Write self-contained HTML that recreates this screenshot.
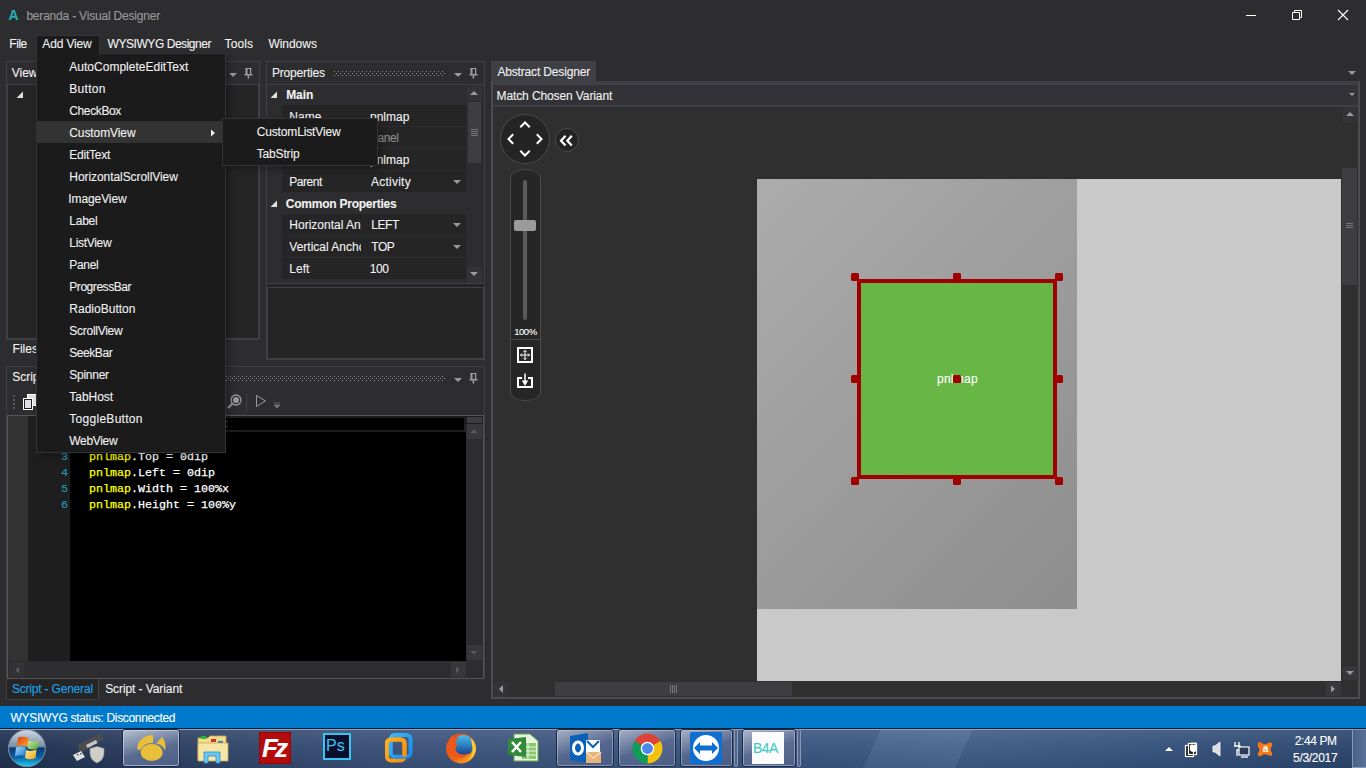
<!DOCTYPE html>
<html><head><meta charset="utf-8">
<style>
*{margin:0;padding:0;box-sizing:border-box}
html,body{width:1366px;height:768px;overflow:hidden;background:#2d2d30;font-family:"Liberation Sans",sans-serif;font-size:12px;color:#f1f1f1}
.a{position:absolute}
.t{position:absolute;white-space:nowrap;-webkit-text-stroke:0.1px currentColor}
.pr{position:absolute;left:282px;width:184px;height:21px;background:#252526}
.dd{position:absolute;width:0;height:0;border-left:4px solid transparent;border-right:4px solid transparent;border-top:4px solid #999}
.code{position:absolute;left:89px;font-family:"Liberation Mono",monospace;font-size:11.67px;line-height:16px;white-space:pre;color:#fff;-webkit-text-stroke:0.25px currentColor;margin-top:1px}
.ln{position:absolute;left:50px;width:18px;text-align:right;font-family:"Liberation Mono",monospace;font-size:11.67px;line-height:16px;color:#2b91af;-webkit-text-stroke:0.2px currentColor;margin-top:1px}
.hd{position:absolute;width:8px;height:8px;background:#a00000;border-radius:1.5px}
</style></head><body>
<!-- window controls -->
<div class="a" style="left:1246px;top:15px;width:10px;height:1px;background:#fff"></div>
<svg class="a" style="left:1290px;top:8px" width="14" height="14"><path d="M4.5 4V2.5H11.5V9.5H10M2.5 4.5H9.5V11.5H2.5Z" stroke="#fff" fill="none"/></svg>
<svg class="a" style="left:1336px;top:8px" width="14" height="14"><path d="M2 2L12 12M12 2L2 12" stroke="#fff" stroke-width="1.1" fill="none"/></svg>

<!-- Views panel -->
<div class="a" style="left:6px;top:61px;width:254px;height:279px;border:1px solid #3f3f46;background:#2d2d30"></div>
<div class="a" style="left:7px;top:84px;width:252px;height:255px;background:#252526;border:1px solid #3f3f46"></div>
<div class="dd" style="left:229px;top:73px"></div>
<svg class="a" style="left:244px;top:67px" width="10" height="12"><g fill="#a0a0a0"><rect x="1.5" y="1" width="2" height="6.5"/><rect x="6" y="1" width="1.2" height="6.5"/><rect x="1.5" y="1" width="5.7" height="1"/><rect x="0.5" y="7" width="8" height="1.5"/><rect x="3.6" y="8.5" width="1.6" height="3"/></g></svg>
<svg class="a" style="left:16px;top:91px" width="8" height="8"><path d="M7 0.5V7H0.5Z" fill="#e0e0e0"/></svg>

<!-- Properties panel -->
<div class="a" style="left:266px;top:61px;width:219px;height:299px;border:1px solid #3f3f46;background:#2d2d30"></div>
<div class="a" style="left:267px;top:284px;width:217px;height:3px;background:#252526"></div>
<div class="a" style="left:267px;top:287px;width:217px;height:72px;background:#252526;border:1px solid #3f3f46"></div>
<svg class="a" style="left:334px;top:71px" width="112" height="5"><defs><pattern id="gp" width="4" height="4" patternUnits="userSpaceOnUse"><rect x="0" y="0" width="1" height="1" fill="#8e8e90"/><rect x="2" y="2" width="1" height="1" fill="#8e8e90"/></pattern></defs><rect width="112" height="5" fill="url(#gp)"/></svg>
<div class="dd" style="left:454px;top:73px"></div>
<svg class="a" style="left:469px;top:67px" width="10" height="12"><g fill="#a0a0a0"><rect x="1.5" y="1" width="2" height="6.5"/><rect x="6" y="1" width="1.2" height="6.5"/><rect x="1.5" y="1" width="5.7" height="1"/><rect x="0.5" y="7" width="8" height="1.5"/><rect x="3.6" y="8.5" width="1.6" height="3"/></g></svg>
<div class="a" style="left:267px;top:84px;width:217px;height:200px;background:#2d2d30;border-top:1px solid #3f3f46;border-bottom:1px solid #3f3f46"></div>
<svg class="a" style="left:270px;top:91px" width="8" height="8"><path d="M7 0.5V7H0.5Z" fill="#e0e0e0"/></svg>
<div class="pr" style="top:105px"></div>
<div class="pr" style="top:127px"></div>
<div class="pr" style="top:149px"></div>
<div class="pr" style="top:171px"></div>
<svg class="a" style="left:270px;top:200px" width="8" height="8"><path d="M7 0.5V7H0.5Z" fill="#e0e0e0"/></svg>
<div class="pr" style="top:214px"></div>
<div class="pr" style="top:236px"></div>
<div class="pr" style="top:258px"></div>
<div class="dd" style="left:453px;top:180px"></div>
<div class="dd" style="left:453px;top:223px"></div>
<div class="dd" style="left:453px;top:245px"></div>
<!-- props scrollbar -->
<div class="a" style="left:467px;top:85px;width:15px;height:197px;background:#2d2d30"></div>
<div class="a" style="left:467px;top:86px;width:15px;height:15px;background:#333337"></div>
<div class="a" style="left:467px;top:267px;width:15px;height:16px;background:#333337"></div>
<svg class="a" style="left:469px;top:89px" width="10" height="8"><path d="M1 6L5 2L9 6Z" fill="#999"/></svg>
<div class="a" style="left:468px;top:102px;width:13px;height:61px;background:#3e3e42"></div>
<div class="a" style="left:471px;top:129px;width:7px;height:1px;background:#777"></div>
<div class="a" style="left:471px;top:131px;width:7px;height:1px;background:#777"></div>
<div class="a" style="left:471px;top:133px;width:7px;height:1px;background:#777"></div>
<div class="a" style="left:471px;top:135px;width:7px;height:1px;background:#777"></div>
<svg class="a" style="left:469px;top:270px" width="10" height="8"><path d="M1 2L5 6L9 2Z" fill="#999"/></svg>

<!-- Scripts panel -->
<div class="a" style="left:6px;top:366px;width:479px;height:313px;border:1px solid #3f3f46;border-bottom:none;background:#2d2d30"></div>
<svg class="a" style="left:58px;top:376px" width="388" height="5"><rect width="388" height="5" fill="url(#gp)"/></svg>
<div class="dd" style="left:454px;top:378px"></div>
<svg class="a" style="left:469px;top:372px" width="10" height="12"><g fill="#a0a0a0"><rect x="1.5" y="1" width="2" height="6.5"/><rect x="6" y="1" width="1.2" height="6.5"/><rect x="1.5" y="1" width="5.7" height="1"/><rect x="0.5" y="7" width="8" height="1.5"/><rect x="3.6" y="8.5" width="1.6" height="3"/></g></svg>
<!-- toolbar -->
<div class="a" style="left:13px;top:395px;width:2px;height:2px;background:#5a5a5a"></div>
<div class="a" style="left:13px;top:399px;width:2px;height:2px;background:#5a5a5a"></div>
<div class="a" style="left:13px;top:403px;width:2px;height:2px;background:#5a5a5a"></div>
<div class="a" style="left:13px;top:407px;width:2px;height:2px;background:#5a5a5a"></div>
<svg class="a" style="left:22px;top:393px" width="16" height="18"><rect x="5.5" y="1.5" width="9" height="11" fill="#e0e0e0" stroke="#fff"/><rect x="1.5" y="5.5" width="9" height="11" fill="#e0e0e0" stroke="#fff"/><rect x="2.5" y="6.5" width="7" height="9" fill="#e0e0e0" stroke="#222"/></svg>
<svg class="a" style="left:226px;top:393px" width="18" height="18"><circle cx="10" cy="7" r="5" stroke="#999" stroke-width="1.3" fill="none"/><circle cx="10" cy="7" r="3" fill="#999"/><path d="M6.5 10.5L2 15" stroke="#999" stroke-width="2.2"/></svg>
<div class="a" style="left:246px;top:393px;width:1px;height:18px;background:#3f3f46"></div>
<svg class="a" style="left:255px;top:394px" width="12" height="14"><path d="M1.5 1.5L10.5 7L1.5 12.5Z" stroke="#999" fill="none"/></svg>
<svg class="a" style="left:273px;top:402px" width="8" height="8"><path d="M1 1H7M1 3L4 6L7 3Z" stroke="#777" fill="#777" stroke-width="0.8"/></svg>
<!-- code area -->
<div class="a" style="left:7px;top:415px;width:477px;height:264px;background:#2d2d30;border:1px solid #555558"></div>
<div class="a" style="left:8px;top:416px;width:20px;height:245px;background:#333333"></div>
<div class="a" style="left:28px;top:416px;width:42px;height:245px;background:#1e1e1e"></div>
<div class="a" style="left:70px;top:416px;width:396px;height:245px;background:#000"></div>
<div class="a" style="left:70px;top:416px;width:396px;height:16px;background:#1e1e1e"></div><div class="a" style="left:70px;top:418px;width:394px;height:12px;background:#000"></div>
<div class="a" style="left:225px;top:421px;width:2px;height:1px;background:#3a9a3a"></div><div class="a" style="left:225px;top:426px;width:2px;height:1px;background:#3a9a3a"></div>
<div class="ln" style="top:448px">3</div>
<div class="ln" style="top:464px">4</div>
<div class="ln" style="top:480px">5</div>
<div class="ln" style="top:496px">6</div>
<div class="code" style="top:448px"><span style="color:#ffff00">pnlmap</span>.Top = 0dip</div>
<div class="code" style="top:464px"><span style="color:#ffff00">pnlmap</span>.Left = 0dip</div>
<div class="code" style="top:480px"><span style="color:#ffff00">pnlmap</span>.Width = 100%x</div>
<div class="code" style="top:496px"><span style="color:#ffff00">pnlmap</span>.Height = 100%y</div>
<!-- code scrollbars -->
<div class="a" style="left:466px;top:416px;width:17px;height:245px;background:#2d2d30"></div>
<div class="a" style="left:466px;top:416px;width:17px;height:8px;background:#3e3e42;border:1px solid #1e1e1e"></div>
<div class="a" style="left:467px;top:424px;width:15px;height:15px;background:#38383c"></div>
<svg class="a" style="left:469px;top:427px" width="10" height="8"><path d="M1.5 6L5 2.5L8.5 6Z" fill="#5a5a5a"/></svg>
<div class="a" style="left:467px;top:645px;width:15px;height:15px;background:#38383c"></div><svg class="a" style="left:469px;top:649px" width="10" height="8"><path d="M1.5 2L5 5.5L8.5 2Z" fill="#5a5a5a"/></svg>
<div class="a" style="left:8px;top:661px;width:458px;height:17px;background:#2d2d30"></div>
<div class="a" style="left:451px;top:662px;width:15px;height:15px;background:#38383c"></div>
<div class="a" style="left:9px;top:662px;width:15px;height:15px;background:#333337"></div>
<svg class="a" style="left:13px;top:665px" width="8" height="10"><path d="M6 1.5L2.5 5L6 8.5Z" fill="#5a5a5a"/></svg>
<svg class="a" style="left:454px;top:665px" width="8" height="10"><path d="M2 1.5L5.5 5L2 8.5Z" fill="#5a5a5a"/></svg>
<!-- bottom tabs -->
<div class="a" style="left:6px;top:679px;width:93px;height:21px;background:#252526;border:1px solid #3f3f46;border-top:none"></div>

<!-- Abstract designer -->
<div class="a" style="left:491px;top:61px;width:105px;height:21px;background:#3f3f46"></div>
<div class="dd" style="left:1348px;top:71px;border-top-color:#999;border-top-width:4.5px"></div>
<div class="a" style="left:491px;top:81px;width:869px;height:618px;background:#3f3f46;border:2px solid #4c4c50;border-top:none"></div>
<div class="a" style="left:493px;top:85px;width:865px;height:20px;background:#333337"></div>
<div class="dd" style="left:1349px;top:93px;border-left-width:3.5px;border-right-width:3.5px;border-top-width:3.5px"></div>
<div class="a" style="left:493px;top:107px;width:865px;height:590px;background:#2f2f2f"></div>
<!-- nav circle -->
<div class="a" style="left:500px;top:114px;width:50px;height:50px;border-radius:50%;background:#242424;border:1px solid #4a4a50"></div>
<svg class="a" style="left:500px;top:114px" width="50" height="50"><g stroke="#fff" stroke-width="2" fill="none" stroke-linecap="square"><path d="M21 12.5L25 8.5L29 12.5"/><path d="M21 37.5L25 41.5L29 37.5"/><path d="M12.5 21L8.5 25L12.5 29"/><path d="M37.5 21L41.5 25L37.5 29"/></g></svg>
<div class="a" style="left:555px;top:128px;width:24px;height:24px;border-radius:50%;background:#242424;border:1px solid #4a4a50"></div>
<svg class="a" style="left:555px;top:128px" width="24" height="24"><path d="M10.5 7.8L6 12.7L10.5 17.6M16.8 7.8L12.3 12.7L16.8 17.6" fill="none" stroke="#fff" stroke-width="2.2"/></svg>
<!-- zoom slider -->
<div class="a" style="left:510px;top:169px;width:31px;height:232px;border-radius:15px/9px;background:#262626;border:1px solid #4a4a50"></div>
<div class="a" style="left:523px;top:180px;width:4px;height:140px;background:#5a5a5a;border-radius:2px"></div>
<div class="a" style="left:514px;top:220px;width:22px;height:11px;background:#9b9b9b;border-radius:2px"></div>
<div class="a" style="left:511px;top:339px;width:29px;height:1px;background:#4a4a50"></div>
<svg class="a" style="left:515px;top:345px" width="20" height="20"><rect x="3" y="3" width="14" height="14" stroke="#fff" stroke-width="2" fill="none"/><path d="M10 5.5V14.5M5.5 10H14.5" stroke="#fff" stroke-width="1"/><path d="M8.5 7L10 5.5L11.5 7M8.5 13L10 14.5L11.5 13M7 8.5L5.5 10L7 11.5M13 8.5L14.5 10L13 11.5" stroke="#fff" fill="none"/></svg>
<svg class="a" style="left:515px;top:371px" width="20" height="20"><path d="M7 7H3V16H17V7H13" stroke="#fff" stroke-width="2" fill="none"/><path d="M10 2.5V11" stroke="#fff" stroke-width="1.5"/><path d="M6.8 9.5H13.2L10 15Z" fill="#fff"/></svg>
<!-- canvas -->
<div class="a" style="left:757px;top:179px;width:584px;height:502px;background:#c9c9c9"></div>
<div class="a" style="left:757px;top:179px;width:320px;height:430px;background:linear-gradient(135deg,#acacac,#8d8d8d)"></div>
<div class="a" style="left:857px;top:279px;width:200px;height:200px;background:#67b646;border:4px solid #a00000"></div>
<div class="hd" style="left:851px;top:273px"></div>
<div class="hd" style="left:953px;top:273px"></div>
<div class="hd" style="left:1055px;top:273px"></div>
<div class="hd" style="left:851px;top:375px"></div>
<div class="hd" style="left:1055px;top:375px"></div>
<div class="hd" style="left:851px;top:477px"></div>
<div class="hd" style="left:953px;top:477px"></div>
<div class="hd" style="left:1055px;top:477px"></div>
<div class="t" style="left:8.50px;top:6.55px;font-size:14px;line-height:17px;color:#1fb0b0;font-weight:bold;">A</div>
<div class="t" style="left:26.40px;top:8.74px;font-size:12px;line-height:14px;color:#999999;letter-spacing:-0.197px;">beranda - Visual Designer</div>
<div class="t" style="left:9.30px;top:36.74px;font-size:12px;line-height:14px;color:#f1f1f1;letter-spacing:-0.450px;">File</div>
<div class="t" style="left:107.60px;top:36.74px;font-size:12px;line-height:14px;color:#f1f1f1;letter-spacing:-0.450px;">WYSIWYG Designer</div>
<div class="t" style="left:224.60px;top:36.74px;font-size:12px;line-height:14px;color:#f1f1f1;letter-spacing:0.072px;">Tools</div>
<div class="t" style="left:268.40px;top:36.74px;font-size:12px;line-height:14px;color:#f1f1f1;letter-spacing:-0.030px;">Windows</div>
<div class="t" style="left:11.70px;top:65.84px;font-size:12px;line-height:14px;color:#f1f1f1;">Views</div>
<div class="t" style="left:272.00px;top:65.84px;font-size:12px;line-height:14px;color:#f1f1f1;letter-spacing:-0.188px;">Properties</div>
<div class="t" style="left:12.60px;top:341.84px;font-size:12px;line-height:14px;color:#f1f1f1;">Files</div>
<div class="t" style="left:12.20px;top:370.44px;font-size:12px;line-height:14px;color:#f1f1f1;">Scripts</div>
<div class="t" style="left:286.20px;top:87.64px;font-size:12px;line-height:14px;color:#f1f1f1;font-weight:bold;letter-spacing:-0.068px;">Main</div>
<div class="t" style="left:285.80px;top:197.04px;font-size:12px;line-height:14px;color:#f1f1f1;font-weight:bold;letter-spacing:-0.238px;">Common Properties</div>
<div class="t" style="left:289.30px;top:109.64px;font-size:12px;line-height:14px;color:#f1f1f1;">Name</div>
<div class="t" style="left:289.30px;top:131.34px;font-size:12px;line-height:14px;color:#f1f1f1;">Type</div>
<div class="t" style="left:289.30px;top:153.34px;font-size:12px;line-height:14px;color:#f1f1f1;">Event Name</div>
<div class="t" style="left:289.30px;top:175.14px;font-size:12px;line-height:14px;color:#f1f1f1;letter-spacing:-0.450px;">Parent</div>
<div class="t" style="left:370.00px;top:109.64px;font-size:12px;line-height:14px;color:#f1f1f1;">pnlmap</div>
<div class="t" style="left:370.00px;top:131.34px;font-size:12px;line-height:14px;color:#8c8c8c;letter-spacing:-0.450px;">Panel</div>
<div class="t" style="left:370.00px;top:153.34px;font-size:12px;line-height:14px;color:#f1f1f1;">pnlmap</div>
<div class="t" style="left:371.00px;top:175.14px;font-size:12px;line-height:14px;color:#f1f1f1;letter-spacing:0.242px;">Activity</div>
<div class="t" style="left:289.30px;top:218.14px;font-size:12px;line-height:14px;color:#f1f1f1;width:72px;overflow:hidden;">Horizontal Anchor</div>
<div class="t" style="left:289.30px;top:240.14px;font-size:12px;line-height:14px;color:#f1f1f1;width:72px;overflow:hidden;">Vertical Anchor</div>
<div class="t" style="left:289.30px;top:262.04px;font-size:12px;line-height:14px;color:#f1f1f1;">Left</div>
<div class="t" style="left:371.30px;top:218.14px;font-size:12px;line-height:14px;color:#f1f1f1;letter-spacing:-0.450px;">LEFT</div>
<div class="t" style="left:371.30px;top:240.14px;font-size:12px;line-height:14px;color:#f1f1f1;letter-spacing:-0.450px;">TOP</div>
<div class="t" style="left:369.70px;top:262.04px;font-size:12px;line-height:14px;color:#f1f1f1;letter-spacing:-0.450px;">100</div>
<div class="t" style="left:497.40px;top:65.04px;font-size:12px;line-height:14px;color:#f1f1f1;letter-spacing:-0.161px;">Abstract Designer</div>
<div class="t" style="left:496.50px;top:88.54px;font-size:12px;line-height:14px;color:#f1f1f1;letter-spacing:-0.105px;">Match Chosen Variant</div>
<div class="t" style="left:514.20px;top:326.01px;font-size:9.5px;line-height:11px;color:#ffffff;letter-spacing:-0.450px;">100%</div>
<div class="t" style="left:937.00px;top:372.44px;font-size:12px;line-height:14px;color:#ffffff;letter-spacing:0.243px;">pnlmap</div>
<div class="t" style="left:11.90px;top:681.74px;font-size:12px;line-height:14px;color:#1ea2ec;letter-spacing:-0.191px;">Script - General</div>
<div class="t" style="left:105.20px;top:681.74px;font-size:12px;line-height:14px;color:#f1f1f1;letter-spacing:-0.089px;">Script - Variant</div>
<div class="hd" style="left:953px;top:375px"></div>
<!-- designer scrollbars -->
<div class="a" style="left:1341px;top:107px;width:17px;height:575px;background:#2f2f2f"></div>
<div class="a" style="left:1342px;top:108px;width:15px;height:15px;background:#333337"></div>
<svg class="a" style="left:1345px;top:110px" width="10" height="8"><path d="M1 6L5 2L9 6Z" fill="#999"/></svg>
<div class="a" style="left:1342px;top:168px;width:15px;height:117px;background:#3e3e42"></div>
<div class="a" style="left:1346px;top:223px;width:7px;height:1px;background:#777"></div>
<div class="a" style="left:1346px;top:225px;width:7px;height:1px;background:#777"></div>
<div class="a" style="left:1346px;top:227px;width:7px;height:1px;background:#777"></div>
<div class="a" style="left:1343px;top:666px;width:14px;height:14px;background:#38383c"></div><svg class="a" style="left:1345px;top:669px" width="10" height="8"><path d="M1 2L5 6L9 2Z" fill="#999"/></svg>
<div class="a" style="left:493px;top:681px;width:848px;height:16px;background:#2f2f2f"></div>
<div class="a" style="left:494px;top:682px;width:15px;height:15px;background:#333337"></div>
<div class="a" style="left:555px;top:682px;width:237px;height:14px;background:#3e3e42"></div>
<div class="a" style="left:670px;top:685px;width:1px;height:8px;background:#777"></div>
<div class="a" style="left:672px;top:685px;width:1px;height:8px;background:#777"></div>
<div class="a" style="left:674px;top:685px;width:1px;height:8px;background:#777"></div>
<div class="a" style="left:676px;top:685px;width:1px;height:8px;background:#777"></div>
<svg class="a" style="left:497px;top:684px" width="8" height="10"><path d="M6 1L2 5L6 9Z" fill="#999"/></svg>
<div class="a" style="left:1326px;top:682px;width:15px;height:14px;background:#38383c"></div><svg class="a" style="left:1329px;top:684px" width="8" height="10"><path d="M2 1.5L6 5L2 8.5Z" fill="#999"/></svg>

<!-- status bar -->
<div class="a" style="left:0;top:706px;width:1366px;height:23px;background:#007acc"></div>

<!-- taskbar -->
<div class="a" style="left:0;top:729px;width:1366px;height:39px;background:linear-gradient(90deg,#2b3d5c,#44608a 45%,#3a5478 70%,#2f4466)"></div>
<div class="a" style="left:0;top:729px;width:1366px;height:39px;background:linear-gradient(90deg,#1f3150 0%,#27395a 8%,#33496f 20%,#3b527a 30%,#3d5680 45%,#3a5580 58%,#3a5682 63%,#3f5b87 71%,#36527d 84%,#2f4a72 95%,#2a436a 100%)"></div>
<div class="a" style="left:872px;top:729px;width:92px;height:39px;background:rgba(120,150,190,0.22);transform:skewX(-25deg)"></div>
<div class="a" style="left:0;top:729px;width:1366px;height:39px;background:linear-gradient(180deg,rgba(255,255,255,0.10),rgba(255,255,255,0.03) 40%,rgba(0,0,0,0.08))"></div>
<div class="a" style="left:0;top:728px;width:1366px;height:1px;background:#142036"></div><div class="a" style="left:0;top:729px;width:1366px;height:1px;background:#8ca2c6"></div>
<!-- start orb -->
<svg class="a" style="left:7px;top:729px" width="40" height="39"><defs><linearGradient id="orb" x1="0" y1="0" x2="0" y2="1"><stop offset="0" stop-color="#d0dae4"/><stop offset="0.45" stop-color="#7890a8"/><stop offset="0.5" stop-color="#0c3c72"/><stop offset="0.75" stop-color="#0a62a8"/><stop offset="1" stop-color="#20d0f4"/></linearGradient><linearGradient id="wr" x1="0" y1="0" x2="1" y2="1"><stop offset="0" stop-color="#e03a1a"/><stop offset="1" stop-color="#f8b020"/></linearGradient><linearGradient id="wg" x1="0" y1="0" x2="1" y2="1"><stop offset="0" stop-color="#d8ecb0"/><stop offset="1" stop-color="#4aa828"/></linearGradient><linearGradient id="wb" x1="0" y1="0" x2="1" y2="1"><stop offset="0" stop-color="#a8d8f8"/><stop offset="1" stop-color="#1a78d0"/></linearGradient><linearGradient id="wy" x1="0" y1="0" x2="1" y2="1"><stop offset="0" stop-color="#fff0a0"/><stop offset="1" stop-color="#f0a010"/></linearGradient></defs><circle cx="19.9" cy="19.2" r="18.4" fill="url(#orb)" stroke="#8a92a4" stroke-width="1"/><path d="M11 8.5Q16 7 22 9L20.5 17Q15 15.5 10 17.5Z" fill="url(#wr)"/><path d="M21.5 11.5Q26.5 14 32 11L30.5 19.5Q25.5 21.5 20.5 19.5Z" fill="url(#wg)"/><path d="M9 18.5Q14 17 19 19L17.5 27Q12.5 25.5 8 27.5Z" fill="url(#wb)"/><path d="M19 21Q24 23 29.5 20.5L28.5 29Q23 31.5 18 29Z" fill="url(#wy)"/></svg>
<!-- usb -->
<svg class="a" style="left:72px;top:733px" width="34" height="31"><path d="M5 12L28 0.5L32 6L9 20Z" fill="#4a4c4e"/><path d="M14 12L24 7L25.5 10L15.5 15Z" fill="#c8c8c8"/><path d="M1 22L9 18L13 24L5 28Z" fill="#e0e0e0"/><rect x="5" y="21" width="1.5" height="1.5" fill="#555"/><rect x="8" y="20" width="1.5" height="1.5" fill="#555"/><path d="M18 15.5L25 13.5L32 15.5V20Q32 27 25 30Q18 27 18 20Z" fill="#cfcfc8" stroke="#9a9a94" stroke-width="0.6"/></svg>
<!-- active button -->
<div class="a" style="left:122px;top:729px;width:58px;height:38px;border:1px solid #1e2842;border-radius:3px;box-shadow:inset 0 0 0 1px rgba(215,225,240,0.6);background:linear-gradient(165deg,#b4bfd0 0%,#8594b0 30%,#5a6c90 55%,#4b5d83 100%)"></div>
<svg class="a" style="left:136px;top:734px" width="30" height="28"><ellipse cx="15.75" cy="18.5" rx="11" ry="8.5" fill="#e9bf3a"/><path d="M1.5 15.5C0 8 8 1 17 1L17 9C11 8.5 7 11 4.5 15.8Z" fill="#e9bf3a"/><path d="M20 9.5L26 3C29 6 30.5 12 29 16.6C27 12 24 10 20 9.5Z" fill="#e9bf3a"/></svg>
<!-- folder -->
<svg class="a" style="left:196px;top:734px" width="34" height="30"><path d="M2 4H12L14 2H30V26H2Z" fill="#f0dc8a" stroke="#c8a850" stroke-width="0.8"/><rect x="5" y="2" width="5" height="3" fill="#22bb33"/><rect x="15" y="5" width="5" height="3" fill="#d23030"/><rect x="22" y="7" width="5" height="3" fill="#2a7ad8"/><path d="M2 9H32V27H2Z" fill="#f5e6a8" stroke="#c8a850" stroke-width="0.8"/><path d="M8 18H24V29H20V22H12V29H8Z" fill="#6cc6f0" stroke="#2a8ac8" stroke-width="0.8"/></svg>
<!-- filezilla -->
<div class="a" style="left:259px;top:732px;width:32px;height:32px;background:#b40c0c;border:1px dotted #7a0000"></div>
<div class="t" style="left:262px;top:733px;font-size:26px;line-height:30px;font-weight:bold;font-style:italic;color:#fff;letter-spacing:-3px">Fz</div>
<!-- photoshop -->
<div class="a" style="left:323px;top:733px;width:28px;height:27px;background:#0b0f2c;border:2px solid #35c5f2"></div>
<div class="t" style="left:326px;top:736px;font-size:16px;line-height:19px;color:#35c5f2">Ps</div>
<!-- vmware -->
<svg class="a" style="left:384px;top:732px" width="30" height="32"><defs><linearGradient id="vmb" x1="0" y1="0" x2="1" y2="1"><stop offset="0" stop-color="#3ab8f8"/><stop offset="1" stop-color="#1a8ae8"/></linearGradient><linearGradient id="vmo" x1="0" y1="0" x2="1" y2="1"><stop offset="0" stop-color="#ffb020"/><stop offset="1" stop-color="#f89010"/></linearGradient></defs><rect x="3" y="7.5" width="17.5" height="21" rx="4" fill="none" stroke="url(#vmo)" stroke-width="4"/><rect x="6.8" y="3" width="19.8" height="21.7" rx="4" fill="none" stroke="url(#vmb)" stroke-width="4"/><path d="M3 12V11.5Q3 7.5 7 7.5H16.5Q20.5 7.5 20.5 11.5V24.7" fill="none" stroke="url(#vmo)" stroke-width="4"/></svg>
<!-- firefox -->
<svg class="a" style="left:445px;top:732px" width="32" height="32"><defs><linearGradient id="ffo" x1="0" y1="0" x2="1" y2="1"><stop offset="0" stop-color="#e0401a"/><stop offset="0.6" stop-color="#f06a1a"/><stop offset="1" stop-color="#ffc828"/></linearGradient><linearGradient id="ffb" x1="0" y1="0" x2="0" y2="1"><stop offset="0" stop-color="#48c0f0"/><stop offset="1" stop-color="#143a8c"/></linearGradient></defs><circle cx="16" cy="16.5" r="15" fill="url(#ffo)"/><circle cx="18" cy="13.5" r="10.5" fill="url(#ffb)"/><path d="M2 15Q3 7 8 3L9 6Q12 5 14 6Q10 8 11 11Q13 13 11 15Q9 18 13 21Q18 24 24 21Q22 25 17 26Q8 27 4 22Q2 19 2 15Z" fill="#ec5a1a"/><path d="M26 6Q31 11 31 17Q30 24 24 28Q29 21 27 13Z" fill="#ffcc30"/></svg>
<!-- excel -->
<svg class="a" style="left:506px;top:731px" width="34" height="32"><path d="M8 3H24L32 10V30H8Z" fill="#e8f4e0" stroke="#6aa84a" stroke-width="1"/><rect x="16" y="12" width="14" height="16" fill="#8ac870"/><path d="M16 16H30M16 20H30M16 24H30M22 12V28" stroke="#e8f4e0"/><path d="M2 8L20 6V26L2 24Z" fill="#2f8a3a"/><path d="M6 11L15 21M15 11L6 21" stroke="#fff" stroke-width="2.5"/></svg>
<!-- grouped buttons -->
<div class="a" style="left:556px;top:729px;width:58px;height:38px;border:1px solid #1e2842;border-radius:3px;box-shadow:inset 0 0 0 1px rgba(200,212,232,0.45);background:linear-gradient(162deg,#a4b0c6 0%,#7a8aa8 28%,#55678e 52%,#4a5c82 100%)"></div>
<div class="a" style="left:618px;top:729px;width:58px;height:38px;border:1px solid #1e2842;border-radius:3px;box-shadow:inset 0 0 0 1px rgba(200,212,232,0.45);background:linear-gradient(162deg,#a4b0c6 0%,#7a8aa8 28%,#55678e 52%,#4a5c82 100%)"></div>
<div class="a" style="left:680px;top:729px;width:53px;height:38px;border:1px solid #1e2842;border-radius:3px;box-shadow:inset 0 0 0 1px rgba(200,212,232,0.45);background:linear-gradient(162deg,#a4b0c6 0%,#7a8aa8 28%,#55678e 52%,#4a5c82 100%)"></div>
<div class="a" style="left:734px;top:729px;width:4px;height:38px;border:1px solid #8898b4;border-radius:2px;background:#53678c"></div>
<div class="a" style="left:742px;top:729px;width:54px;height:38px;border:1px solid #1e2842;border-radius:3px;box-shadow:inset 0 0 0 1px rgba(200,212,232,0.5);background:linear-gradient(162deg,#aab6ca 0%,#8090ae 28%,#5a6c92 52%,#4e6086 100%)"></div>
<div class="a" style="left:797px;top:729px;width:4px;height:38px;border:1px solid #8898b4;border-radius:2px;background:#53678c"></div>
<!-- outlook -->
<svg class="a" style="left:568px;top:732px" width="36" height="32"><path d="M2 4L20 1V31L2 28Z" fill="#0a62b8"/><ellipse cx="10" cy="16" rx="4.5" ry="6" fill="none" stroke="#fff" stroke-width="3"/><rect x="18" y="8" width="14" height="12" fill="#fff"/><path d="M19 9L25 15L31 9" stroke="#0a62b8" stroke-width="2" fill="none"/><rect x="18" y="20" width="15" height="11" fill="#e8b47a"/><path d="M18 20L25.5 26L33 20" stroke="#fff" stroke-width="1" fill="none"/></svg>
<!-- chrome -->
<svg class="a" style="left:632px;top:733px" width="31" height="31"><path d="M15.5 15.5L2.51 8A15 15 0 0 1 28.49 8Z" fill="#db4437"/><path d="M15.5 15.5L28.49 8A15 15 0 0 1 15.5 30.5Z" fill="#f4c20d"/><path d="M15.5 15.5L15.5 30.5A15 15 0 0 1 2.51 8Z" fill="#0f9d58"/><circle cx="15.5" cy="15.5" r="6.8" fill="#fff"/><circle cx="15.5" cy="15.5" r="5.4" fill="#4a88ee"/></svg>
<!-- teamviewer -->
<div class="a" style="left:690px;top:732px;width:32px;height:32px;background:#0e6fd0;border-radius:2px"></div>
<svg class="a" style="left:690px;top:732px" width="32" height="32"><circle cx="16" cy="16" r="13" fill="#fff"/><path d="M4 16L10 10V13.5H22V10L28 16L22 22V18.5H10V22Z" fill="#0e6fd0"/></svg>
<!-- b4a -->
<div class="a" style="left:752px;top:732px;width:32px;height:32px;background:#fbfbfb"></div>
<div class="t" style="left:753px;top:740px;font-size:14px;line-height:16px;color:#3fcbc4;letter-spacing:-0.5px">B4A</div>
<!-- tray -->
<svg class="a" style="left:1164px;top:746px" width="10" height="6"><path d="M1 5L5 1L9 5Z" fill="#fff"/></svg>
<svg class="a" style="left:1184px;top:741px" width="16" height="17"><rect x="1.5" y="4.5" width="8" height="11" fill="#1a1a1a" stroke="#fff" stroke-width="1.2"/><rect x="4.5" y="2.5" width="8" height="11" fill="#1a1a1a" stroke="#fff" stroke-width="1.2"/><path d="M8 1V4M11 1V4M6.5 4.5H12.5V8Q12.5 10.5 9.5 10.5Q6.5 10.5 6.5 8Z M9.5 10.5V16" stroke="#fff" fill="#fff" stroke-width="1.1"/></svg>
<svg class="a" style="left:1212px;top:741px" width="10" height="16"><path d="M1 5H3L8 1V15L3 11H1Z" fill="#ddd" stroke="#fff" stroke-width="0.8"/></svg>
<svg class="a" style="left:1233px;top:741px" width="17" height="17"><path d="M2 1V5M6 1V5M1 5H7V9H4V15" stroke="#fff" stroke-width="1.3" fill="none"/><rect x="6" y="6" width="10" height="8" fill="#2a3a5a" stroke="#fff" stroke-width="1.2"/><path d="M8 16H15" stroke="#fff" stroke-width="1.3"/></svg>
<svg class="a" style="left:1256px;top:740px" width="18" height="18"><path d="M4 2Q9 6 12 3Q17 1 16 6Q13 9 16 13Q17 17 12 15Q8 13 5 16Q1 17 2 13Q5 10 2 7Q1 2 4 2Z" fill="#f47a1a"/><text x="9.5" y="12" font-family="Liberation Sans" font-size="10" font-weight="bold" fill="#fff" text-anchor="middle">a</text></svg>
<!-- show desktop -->
<div class="a" style="left:1352px;top:729px;width:14px;height:39px;border:1px solid #8898b4;border-right:none;background:linear-gradient(90deg,#4a6288,#5a7298)"></div>
<div class="t" style="left:10.60px;top:710.64px;font-size:12px;line-height:14px;color:#ffffff;letter-spacing:-0.340px;">WYSIWYG status: Disconnected</div>
<div class="t" style="left:1294.70px;top:733.84px;font-size:12px;line-height:14px;color:#ffffff;letter-spacing:-0.399px;">2:44 PM</div>
<div class="t" style="left:1293.00px;top:750.84px;font-size:12px;line-height:14px;color:#ffffff;letter-spacing:-0.291px;">5/3/2017</div>
<!-- Add View menu (on top) -->
<div class="a" style="left:36px;top:53px;width:190px;height:400px;background:#1b1b1c;border:1px solid #333337;box-shadow:4px 4px 6px rgba(0,0,0,0.25)"></div>
<div class="a" style="left:36px;top:35px;width:64px;height:20px;background:#1b1b1c;border:1px solid #333337;border-bottom:none"></div>
<div class="a" style="left:37px;top:121px;width:186px;height:22px;background:#333334"></div>
<svg class="a" style="left:210px;top:129px" width="6" height="8"><path d="M1 0.5L5 4L1 7.5Z" fill="#f1f1f1"/></svg>
<div class="a" style="left:222px;top:118px;width:156px;height:48px;background:#1b1b1c;border:1px solid #333337;box-shadow:4px 4px 6px rgba(0,0,0,0.25)"></div>
<div class="t" style="left:69.30px;top:59.64px;font-size:12px;line-height:14px;color:#f1f1f1;letter-spacing:0.011px;">AutoCompleteEditText</div>
<div class="t" style="left:69.30px;top:81.64px;font-size:12px;line-height:14px;color:#f1f1f1;letter-spacing:0.276px;">Button</div>
<div class="t" style="left:69.30px;top:103.64px;font-size:12px;line-height:14px;color:#f1f1f1;letter-spacing:-0.384px;">CheckBox</div>
<div class="t" style="left:69.30px;top:125.64px;font-size:12px;line-height:14px;color:#f1f1f1;letter-spacing:-0.097px;">CustomView</div>
<div class="t" style="left:69.30px;top:147.64px;font-size:12px;line-height:14px;color:#f1f1f1;letter-spacing:-0.236px;">EditText</div>
<div class="t" style="left:69.30px;top:169.64px;font-size:12px;line-height:14px;color:#f1f1f1;letter-spacing:-0.066px;">HorizontalScrollView</div>
<div class="t" style="left:68.30px;top:191.64px;font-size:12px;line-height:14px;color:#f1f1f1;letter-spacing:-0.097px;">ImageView</div>
<div class="t" style="left:69.30px;top:213.64px;font-size:12px;line-height:14px;color:#f1f1f1;letter-spacing:-0.249px;">Label</div>
<div class="t" style="left:69.30px;top:235.64px;font-size:12px;line-height:14px;color:#f1f1f1;letter-spacing:-0.314px;">ListView</div>
<div class="t" style="left:69.30px;top:257.64px;font-size:12px;line-height:14px;color:#f1f1f1;letter-spacing:-0.331px;">Panel</div>
<div class="t" style="left:69.30px;top:279.64px;font-size:12px;line-height:14px;color:#f1f1f1;letter-spacing:-0.450px;">ProgressBar</div>
<div class="t" style="left:69.30px;top:301.64px;font-size:12px;line-height:14px;color:#f1f1f1;letter-spacing:0.013px;">RadioButton</div>
<div class="t" style="left:69.30px;top:323.64px;font-size:12px;line-height:14px;color:#f1f1f1;letter-spacing:-0.270px;">ScrollView</div>
<div class="t" style="left:69.30px;top:345.64px;font-size:12px;line-height:14px;color:#f1f1f1;letter-spacing:-0.450px;">SeekBar</div>
<div class="t" style="left:69.30px;top:367.64px;font-size:12px;line-height:14px;color:#f1f1f1;letter-spacing:-0.261px;">Spinner</div>
<div class="t" style="left:69.30px;top:389.64px;font-size:12px;line-height:14px;color:#f1f1f1;letter-spacing:-0.031px;">TabHost</div>
<div class="t" style="left:69.30px;top:411.64px;font-size:12px;line-height:14px;color:#f1f1f1;letter-spacing:0.284px;">ToggleButton</div>
<div class="t" style="left:69.30px;top:433.64px;font-size:12px;line-height:14px;color:#f1f1f1;letter-spacing:-0.331px;">WebView</div>
<div class="t" style="left:42.30px;top:36.74px;font-size:12px;line-height:14px;color:#f1f1f1;letter-spacing:-0.145px;">Add View</div>
<div class="t" style="left:256.70px;top:124.84px;font-size:12px;line-height:14px;color:#f1f1f1;letter-spacing:-0.142px;">CustomListView</div>
<div class="t" style="left:256.70px;top:146.84px;font-size:12px;line-height:14px;color:#f1f1f1;letter-spacing:-0.150px;">TabStrip</div>

</body></html>
